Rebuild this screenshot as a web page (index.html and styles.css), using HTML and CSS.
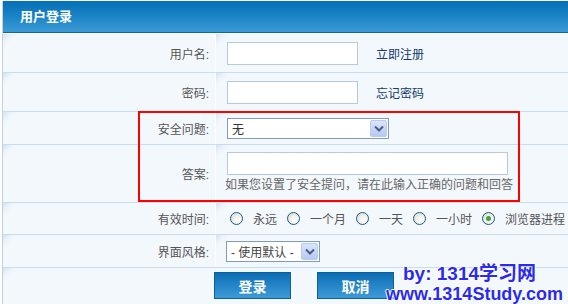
FILE: index.html
```html
<!DOCTYPE html>
<html>
<head>
    <meta charset="utf-8">
    <link rel="stylesheet" href="styles.css">
    <title>用户登录</title>
</head>
<body>
<div class="page">
    <div class="panel">
        <div class="panel-head">用户登录</div>
        <form class="login-form">
            <div class="row row-38">
                <div class="cell label">用户名:</div>
                <div class="cell value">
                    <input type="text" class="txt">
                    <a href="#" class="side-link">立即注册</a>
                </div>
            </div>
            <div class="row row-38">
                <div class="cell label">密码:</div>
                <div class="cell value">
                    <input type="password" class="txt">
                    <a href="#" class="side-link">忘记密码</a>
                </div>
            </div>
            <div class="row row-32">
                <div class="cell label">安全问题:</div>
                <div class="cell value">
                    <div class="select-box select-wide">
                        <span class="select-text">无</span>
                        <span class="select-arrow">
                            <svg width="10" height="7" viewBox="0 0 10 7"><path d="M1 1.5 L5 5.5 L9 1.5" fill="none" stroke="#4a5f80" stroke-width="2"/></svg>
                        </span>
                    </div>
                </div>
            </div>
            <div class="row row-57">
                <div class="cell label">答案:</div>
                <div class="cell value value-stack">
                    <input type="text" class="txt txt-wide">
                    <div class="hint">如果您设置了安全提问，请在此输入正确的问题和回答</div>
                </div>
            </div>
            <div class="row row-31">
                <div class="cell label">有效时间:</div>
                <div class="cell value radios">
                    <span class="radio"></span><span class="radio-label">永远</span>
                    <span class="radio"></span><span class="radio-label">一个月</span>
                    <span class="radio"></span><span class="radio-label">一天</span>
                    <span class="radio"></span><span class="radio-label">一小时</span>
                    <span class="radio checked"></span><span class="radio-label">浏览器进程</span>
                </div>
            </div>
            <div class="row row-32">
                <div class="cell label">界面风格:</div>
                <div class="cell value">
                    <div class="select-box select-style">
                        <span class="select-text">- 使用默认 -</span>
                        <span class="select-arrow">
                            <svg width="10" height="7" viewBox="0 0 10 7"><path d="M1 1.5 L5 5.5 L9 1.5" fill="none" stroke="#4a5f80" stroke-width="2"/></svg>
                        </span>
                    </div>
                </div>
            </div>
            <div class="row-buttons">
                <button type="button" class="btn">登录</button>
                <button type="button" class="btn">取消</button>
            </div>
        </form>
    </div>

    <div class="highlight"></div>
    <div class="watermark">
        <div class="wm-line1">by: 1314学习网</div>
        <div class="wm-line2">www.1314Study.com</div>
    </div>
</div>
</body>
</html>
```

FILE: styles.css
```css
* {
    box-sizing: border-box;
}

body {
    margin: 0;
    background: #fff;
    font: 12px "Liberation Sans", "Noto Sans CJK SC", sans-serif;
    color: #555;
    overflow: hidden;
}

.page {
    position: relative;
    width: 568px;
    height: 304px;
    overflow: hidden;
}

.panel {
    margin: 1px 0 0 2px;
    width: 600px;
    border-left: 1px solid #c3d2e0;
}

.panel-head {
    height: 32px;
    padding-left: 17px;
    line-height: 31px;
    font-size: 13px;
    font-weight: bold;
    color: #fff;
    background: linear-gradient(#0570b6, #1b83c6 50%, #3a9bd5);
    border-bottom: 1px solid #0f67a6;
}

.login-form {
    border-top: 1px solid #fff;
}

/* table rows */
.row {
    display: grid;
    grid-template-columns: 212px 1fr;
    column-gap: 1px;
    background: #fff;
    border-bottom: 1px solid #cadded;
}

.row-38 { height: 39px; }
.row-32 { height: 33px; }
.row-57 { height: 58px; }
.row-31 { height: 32px; }

.cell {
    background: linear-gradient(135deg, #d4e2f3 0, #eef4fb 7px, #f3f8fd 11px) #f3f8fd;
    display: flex;
    align-items: center;
}

.label {
    justify-content: flex-end;
    padding-right: 6px;
    color: #555;
}

.value {
    padding-left: 11px;
}

.value-stack {
    flex-direction: column;
    align-items: flex-start;
    justify-content: flex-start;
    padding-top: 7px;
    padding-left: 9px;
}

.txt {
    width: 131px;
    height: 23px;
    border: 1px solid #b5c9e1;
    background: #fff;
    margin: 0;
}

.txt-wide {
    width: 281px;
    margin-left: 2px;
}

.side-link {
    margin-left: 18px;
    color: #12386a;
    text-decoration: none;
}

.hint {
    margin-top: 2px;
    color: #666;
    line-height: 17px;
}

/* fake select boxes */
.select-box {
    display: flex;
    align-items: center;
    justify-content: space-between;
    height: 21px;
    border: 1px solid #7f9db9;
    background: #fff;
    padding: 0 1px 0 4px;
    color: #333;
}

.select-wide {
    width: 162px;
}

.select-style {
    width: 94px;
    margin-left: -1px;
    color: #444;
}

.select-arrow {
    width: 17px;
    height: 17px;
    display: flex;
    align-items: center;
    justify-content: center;
    border: 1px solid #b9c9ef;
    border-radius: 2px;
    background: linear-gradient(#dae4fb, #b7c9f4);
}

/* radio group */
.radios {
    padding-left: 14px;
}

.radio {
    width: 13px;
    height: 13px;
    border-radius: 50%;
    border: 1px solid #1e5a8a;
    background: radial-gradient(circle at 65% 65%, #fff 0, #f2f2ee 40%, #d3d2c8 100%);
    margin-right: 10px;
    display: flex;
    align-items: center;
    justify-content: center;
}

.radio.checked::after {
    content: "";
    width: 5px;
    height: 5px;
    border-radius: 50%;
    background: #3fa43a;
}

.radio-label {
    margin-right: 10px;
    color: #555;
}

/* buttons */
.row-buttons {
    height: 37px;
    padding: 4px 0 0 211px;
    background: linear-gradient(135deg, #d4e2f3 0, #eef4fb 7px, #f3f8fd 11px) #f3f8fd;
    display: flex;
    align-items: flex-start;
    gap: 26px;
}

.btn {
    width: 77px;
    height: 27px;
    border: 1px solid #4f9fd6;
    outline: 1px solid #0b5f9c;
    outline-offset: -1px;
    background: linear-gradient(#0c6db3, #2585c8 50%, #3e9ad6);
    color: #fff;
    font: bold 14px "Noto Sans CJK SC", sans-serif;
    padding: 0;
}

/* overlays */
.highlight {
    position: absolute;
    left: 138px;
    top: 111px;
    width: 382px;
    height: 91px;
    border: 2px solid #ff0000;
}

.watermark {
    position: absolute;
    left: 386px;
    top: 263px;
    font-family: "Liberation Sans", "Noto Sans CJK SC", sans-serif;
    font-weight: bold;
    color: #2b2bef;
    text-shadow: 1px 0 #fff, -1px 0 #fff, 0 1px #fff, 0 -1px #fff;
}

.wm-line1 {
    margin-left: 17px;
    font-size: 19px;
    line-height: 22px;
}

.wm-line2 {
    font-size: 18px;
    line-height: 18px;
}
```
